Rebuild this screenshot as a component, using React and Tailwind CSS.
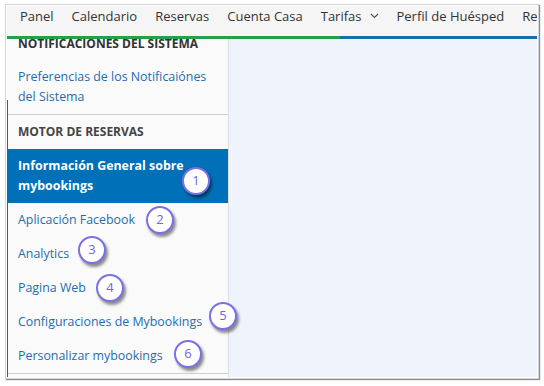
import React from "react";

const navItems = ["Panel", "Calendario", "Reservas", "Cuenta Casa", "Tarifas", "Perfil de Huésped", "Re"];

const links = [
  "Aplicación Facebook",
  "Analytics",
  "Pagina Web",
  "Configuraciones de Mybookings",
  "Personalizar mybookings",
];

const badges = [
  { n: 1, x: 196, y: 181 },
  { n: 2, x: 160, y: 220 },
  { n: 3, x: 92, y: 250 },
  { n: 4, x: 110, y: 288 },
  { n: 5, x: 223, y: 316 },
  { n: 6, x: 188, y: 354 },
];

const Badge = ({ n, x, y }) => (
  <div
    className="absolute w-[28px] h-[28px] rounded-full bg-white border-2 border-[#7a70e8] flex items-center justify-center text-[13px] text-[#6f66e0] shadow-[2px_3px_3px_rgba(0,0,0,0.45)]"
    style={{ left: x - 14, top: y - 14 }}
  >
    {n}
  </div>
);

export default function App() {
  return (
    <div
      className="relative w-[544px] h-[386px] bg-white overflow-hidden"
      style={{ fontFamily: '"Open Sans", "Noto Sans", sans-serif' }}
    >
      <div className="absolute left-[5px] top-[4px] w-[534px] h-[375px] border border-[#d4d4d4] bg-white p-px shadow-[1px_1px_1px_rgba(0,0,0,0.45)]">
        <div className="relative w-[530px] h-[371px] flex flex-col">
          <nav className="h-[30px] bg-[#f5f5f5] flex items-start pt-[1px] pl-[13px] gap-[18px] text-[13px] leading-[18px] text-[#333] whitespace-nowrap overflow-hidden">
            {navItems.map((item) => (
              <span key={item} className="flex items-center gap-[8px]">
                {item}
                {item === "Tarifas" && (
                  <svg width="9" height="6" viewBox="0 0 9 6" fill="none" stroke="#555" strokeWidth="1.2">
                    <path d="M1 1l3.5 3.5L8 1" />
                  </svg>
                )}
              </span>
            ))}
          </nav>
          <div className="h-[3px] flex">
            <div className="w-[333px] bg-[#22a04b]" />
            <div className="flex-1 bg-[#1a6ea8]" />
          </div>
          <div className="flex flex-1 min-h-0">
            <aside className="w-[222px] bg-[#fafafa] border-r border-[#dddddd] overflow-hidden flex flex-col">
              <div className="px-[11px] -mt-[3px] text-[12px] font-bold text-[#333] leading-[16px]">
                NOTIFICACIONES DEL SISTEMA
              </div>
              <div className="px-[11px] pt-[15px] pb-[7px] text-[12.4px] leading-[20px] text-[#1f6db0]">
                Preferencias de los Notificaiónes
                <br />
                del Sistema
              </div>
              <div className="border-t border-[#d0d0d0]" />
              <div className="px-[11px] pt-[9px] pb-[9px] text-[12px] font-bold text-[#444] leading-[16px]">
                MOTOR DE RESERVAS
              </div>
              <div className="bg-[#0070b8] text-white font-bold text-[12.4px] leading-[20px] px-[11px] py-[7px]">
                Información General sobre
                <br />
                mybookings
              </div>
              {links.map((l) => (
                <div key={l} className="px-[11px] py-[7px] text-[12.4px] leading-[20px] text-[#1f6db0]">
                  {l}
                </div>
              ))}
              <div className="border-t border-[#d0d0d0]" />
            </aside>
            <main className="flex-1 bg-[#eff3fb]" />
          </div>
          <div className="absolute left-0 top-[94px] bottom-0 w-px bg-[#555]" />
        </div>
      </div>
      {badges.map((b) => (
        <Badge key={b.n} {...b} />
      ))}
    </div>
  );
}
